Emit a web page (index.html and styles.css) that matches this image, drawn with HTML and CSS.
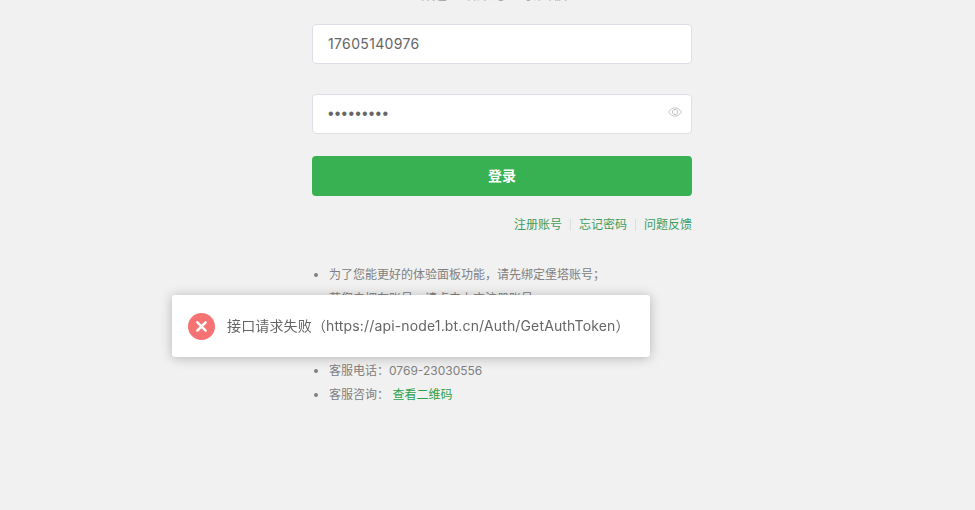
FILE: index.html
```html
<!DOCTYPE html>
<html lang="zh-CN">
<head>
<meta charset="utf-8">
<title>登录</title>
<link rel="stylesheet" href="styles.css">
</head>
<body>
<main class="login">
  <h1 class="title">绑定堡塔账号登录面板</h1>
  <div class="field"><input class="input input-user" type="text" value="17605140976" aria-label="账号"></div>
  <div class="field field-pass">
    <input class="input input-pass" type="password" value="123456789" aria-label="密码">
    <svg class="eye" viewBox="0 0 14 10" width="14" height="10" aria-hidden="true">
      <path d="M.6 5C2.3 2.2 4.5.8 7 .8s4.700 1.400 6.400 4.200C11.700 7.800 9.500 9.200 7 9.200S2.300 7.800.6 5z" fill="none" stroke="#c4c4c4"/>
      <circle cx="7" cy="5" r="2.600" fill="none" stroke="#c4c4c4"/>
    </svg>
  </div>
  <button class="submit" type="button">登录</button>
  <nav class="links">
    <a href="#">注册账号</a><a href="#">忘记密码</a><a href="#">问题反馈</a>
  </nav>
  <ul class="notes">
    <li>为了您能更好的体验面板功能，请先绑定堡塔账号；</li>
    <li>若您未拥有账号，请点击上方注册账号；</li>
    <li>绑定后可享受更多面板服务；</li>
    <li>如有疑问，请联系客服；</li>
    <li>客服电话：0769-23030556</li>
    <li>客服咨询： <a href="#">查看二维码</a></li>
  </ul>
</main>
<div class="toast" role="alert">
  <svg class="toast-icon" viewBox="0 0 26 26" width="27" height="27" aria-hidden="true">
    <circle cx="13" cy="13" r="13" fill="#f56c6c" opacity=".95"/>
    <path d="M9 9l8 8M17 9l-8 8" stroke="#fff" stroke-width="2.400" stroke-linecap="round"/>
  </svg>
  <span class="toast-text">接口请求失败（https://api-node1.bt.cn/Auth/GetAuthToken）</span>
</div>
</body>
</html>
```
FILE: styles.css
```css
html, body {
  margin: 0;
  height: 510px;
  overflow: hidden;
  background: #f1f1f1;
  font-family: Inter, "Noto Sans CJK SC", sans-serif;
  color: #666;
}
.login {
  width: 380px;
  margin: 0 auto 0 312px;
  display: flex;
  flex-direction: column;
}
.title {
  margin: -17px 20px 20px 0;
  height: 21px;
  font-size: 15px;
  line-height: 21px;
  font-weight: 400;
  text-align: center;
  color: #aaa;
}
.field { margin-bottom: 30px; display: flex; position: relative; }
.field-pass { margin-bottom: 22px; }
.input {
  flex: 1;
  box-sizing: border-box;
  height: 40px;
  padding: 0 15px;
  border: 1px solid #dcdfe6;
  border-radius: 4px;
  background: #fff;
  font: 14px Inter, "Noto Sans CJK SC", sans-serif;
  color: #666;
}
.input-user { padding-bottom: 2px; letter-spacing: .35px; }
.input-pass { font: 16px "Liberation Sans", sans-serif; letter-spacing: 1.2px; }
.eye { position: absolute; right: 10px; top: 13px; }
.submit {
  height: 40px;
  padding: 0 0 2px;
  border: 0;
  border-radius: 4px;
  background: #38b152;
  color: #fff;
  font: 700 14px "Noto Sans CJK SC", sans-serif;
}
.links {
  display: flex;
  justify-content: flex-end;
  margin-top: 21px;
  font-size: 12px;
  line-height: 16px;
}
.links a { color: #3d9d60; text-decoration: none; }
.links a + a { margin-left: 8px; padding-left: 9px; position: relative; }
.links a + a::before {
  content: "";
  position: absolute;
  left: 0;
  top: 2px;
  height: 12px;
  border-left: 1px solid #ddd;
}
.notes {
  margin: 30px 0 0;
  padding-left: 17px;
  font-size: 12px;
  line-height: 24px;
  color: #808080;
}
.notes a { color: #2ea14c; text-decoration: none; }
.toast {
  position: fixed;
  left: 172px;
  top: 295px;
  box-sizing: border-box;
  width: 478px;
  height: 62px;
  padding: 0 16px;
  display: flex;
  align-items: center;
  gap: 12px;
  background: #fff;
  border-radius: 3px;
  box-shadow: 0 1px 12px rgba(0, 0, 0, .25);
}
.toast-text { margin-bottom: 2px; font-size: 14px; letter-spacing: .15px; color: #666; white-space: nowrap; }
```
